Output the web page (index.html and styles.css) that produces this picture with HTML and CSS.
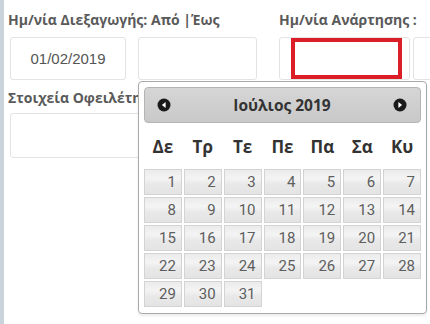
FILE: index.html
```html
<!DOCTYPE html>
<html lang="el">
<head>
<meta charset="utf-8">
<link rel="stylesheet" href="styles.css">
</head>
<body>
<div class="page">
  <div class="row row1">
    <div class="group g1">
      <div class="label">Ημ/νία Διεξαγωγής: Από |Έως</div>
      <div class="inputs">
        <div class="input in1">01/02/2019</div>
        <div class="input in2"></div>
      </div>
    </div>
    <div class="group g2">
      <div class="label">Ημ/νία Ανάρτησης :</div>
      <div class="inputs">
        <div class="input in3"><div class="redbox"></div></div>
        <div class="input in4"></div>
      </div>
    </div>
  </div>
  <div class="row row2">
    <div class="label">Στοιχεία Οφειλέτη</div>
    <div class="input in5"></div>
  </div>

  <div class="datepicker">
    <div class="dp-header">
      <span class="dp-nav prev"><svg width="14" height="14" viewBox="0 0 14 14"><circle cx="7" cy="7" r="6.5" fill="#1a1a1a"/><path d="M8.6 4 L4.9 7 L8.6 10 Z" fill="#fff"/></svg></span>
      <span class="dp-title">Ιούλιος 2019</span>
      <span class="dp-nav next"><svg width="14" height="14" viewBox="0 0 14 14"><circle cx="7" cy="7" r="6.5" fill="#1a1a1a"/><path d="M5.4 4 L9.1 7 L5.4 10 Z" fill="#fff"/></svg></span>
    </div>
    <div class="dp-days">
      <span>Δε</span><span>Τρ</span><span>Τε</span><span>Πε</span><span>Πα</span><span>Σα</span><span>Κυ</span>
    </div>
    <div class="dp-grid">
      <span class="d">1</span><span class="d">2</span><span class="d">3</span><span class="d">4</span><span class="d">5</span><span class="d">6</span><span class="d">7</span>
      <span class="d">8</span><span class="d">9</span><span class="d">10</span><span class="d">11</span><span class="d">12</span><span class="d">13</span><span class="d">14</span>
      <span class="d">15</span><span class="d">16</span><span class="d">17</span><span class="d">18</span><span class="d">19</span><span class="d">20</span><span class="d">21</span>
      <span class="d">22</span><span class="d">23</span><span class="d">24</span><span class="d">25</span><span class="d">26</span><span class="d">27</span><span class="d">28</span>
      <span class="d">29</span><span class="d">30</span><span class="d">31</span>
    </div>
  </div>
</div>
</body>
</html>
```
FILE: styles.css
```css
html, body {
  margin: 0;
  padding: 0;
  background: #fff;
}
.page {
  position: relative;
  width: 430px;
  height: 324px;
  overflow: hidden;
  border-left: 4px solid #c9d3dc;
  padding-left: 4px;
  box-sizing: border-box;
  font-family: "Open Sans", "DejaVu Sans", sans-serif;
}
.label {
  font-size: 14px;
  line-height: 18px;
  font-weight: 700;
  color: #5a5a5a;
  white-space: nowrap;
}
.row1 {
  display: flex;
  padding-top: 11px;
}
.group { flex-shrink: 0; }
.g1 { width: 271px; }
.inputs {
  display: flex;
  gap: 12px;
  margin-top: 8px;
}
.g1 .inputs { margin-left: 2px; }
.input {
  flex-shrink: 0;
  height: 43px;
  box-sizing: border-box;
  border: 1px solid #e3e3e3;
  border-radius: 3px;
  background: #fff;
}
.in1 {
  width: 116px;
  display: flex;
  align-items: center;
  justify-content: center;
  font-family: "Liberation Sans", Arial, sans-serif;
  font-size: 15px;
  color: #555;
}
.in2 { width: 119px; }
.in3 {
  width: 131px;
  padding: 1px 7px 0 11px;
}
.redbox {
  height: 41px;
  box-sizing: border-box;
  border: 4px solid #dc1f26;
  margin-top: -1px;
}
.in4 { width: 60px; }
.g2 .inputs { gap: 3px; }
.row2 {
  margin-top: 9px;
}
.in5 {
  width: 300px;
  height: 45px;
  margin: 6px 0 0 2px;
}

.datepicker {
  position: absolute;
  left: 134px;
  top: 81px;
  width: 289px;
  height: 233px;
  box-sizing: border-box;
  border: 1px solid #aaa;
  border-radius: 4px;
  background: #fff;
  padding: 5px 5px 0 5px;
  box-shadow: 0 2px 3px rgba(0,0,0,0.08);
}
.dp-header {
  height: 36px;
  box-sizing: border-box;
  border: 1px solid #b4b4b4;
  border-radius: 4px;
  background: linear-gradient(#d6d6d6, #cfcfcf 50%, #c9c9c9);
  display: flex;
  align-items: center;
  padding: 0 13px 0 12px;
}
.dp-nav { display: flex; width: 14px; height: 14px; }
.dp-title {
  flex: 1;
  text-align: center;
  font-weight: 700;
  font-size: 15.5px;
  color: #333;
}
.dp-days {
  display: grid;
  grid-template-columns: repeat(7, 1fr);
  column-gap: 2px;
  height: 46px;
  align-items: center;
  text-align: center;
  font-weight: 700;
  font-size: 17px;
  color: #333;
}
.dp-grid {
  display: grid;
  grid-template-columns: repeat(7, 1fr);
  gap: 2px;
  grid-auto-rows: 26px;
}
.d {
  box-sizing: border-box;
  border: 1px solid #d3d3d3;
  background: linear-gradient(#ebebeb, #f4f4f4 35%, #e8e8e8 60%, #e4e4e4);
  text-align: right;
  padding-right: 5px;
  font-family: Roboto, "Liberation Sans", sans-serif;
  font-size: 15px;
  line-height: 25px;
  color: #5e5e5e;
}
```
